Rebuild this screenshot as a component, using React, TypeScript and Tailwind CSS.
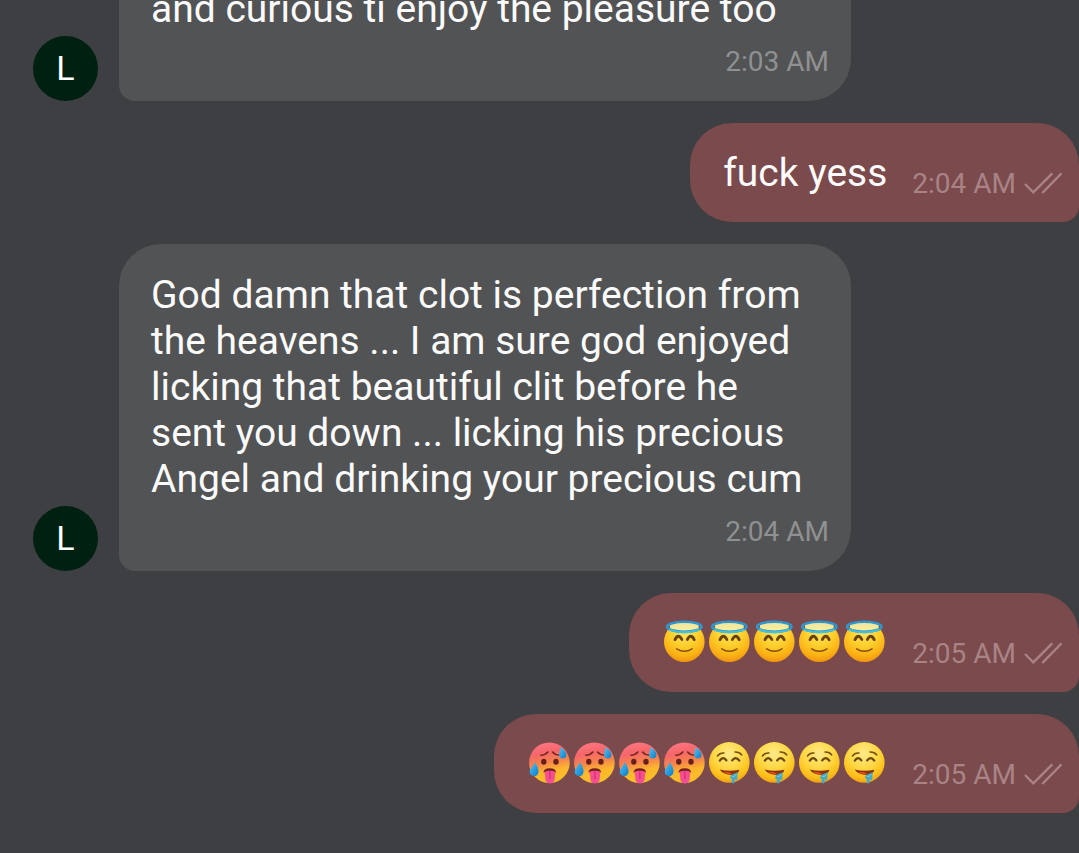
import type { ReactNode } from "react";

function AngelFace() {
  return (
    <svg viewBox="0 0 45 45" className="size-[45px] shrink-0" role="img" aria-label="smiling face with halo">
      <defs>
        <radialGradient id="angel" cx="0.5" cy="0.25" r="0.76">
          <stop offset="0" stopColor="#ffe766" />
          <stop offset="0.45" stopColor="#fed02e" />
          <stop offset="0.8" stopColor="#fbb013" />
          <stop offset="1" stopColor="#ee9112" />
        </radialGradient>
        <linearGradient id="halo" x1="0" y1="0" x2="0" y2="1">
          <stop offset="0" stopColor="#efe39a" />
          <stop offset="1" stopColor="#f8efa0" />
        </linearGradient>
      </defs>
      <circle cx="22.3" cy="21.7" r="20.3" fill="url(#angel)" />
      <ellipse cx="22.3" cy="6" rx="14.5" ry="4.6" fill="url(#halo)" />
      <ellipse cx="22.3" cy="6.8" rx="17.2" ry="5" fill="none" stroke="#2f97cf" strokeWidth="2.6" />
      <path d="M8 10Q22 14.6 36.5 10" fill="none" stroke="#42c0df" strokeWidth="2.2" strokeLinecap="round" />
      <path d="M13 19.6Q16.3 13 19.8 19.4M25.4 19.4Q28.8 13 32.2 19.6" fill="none" stroke="#67420f" strokeWidth="2.9" strokeLinecap="round" />
      <path d="M14.7 28.8Q22.3 33.8 30 28.8" fill="none" stroke="#85510b" strokeWidth="1.5" strokeLinecap="round" />
    </svg>
  );
}

function HotFace() {
  return (
    <svg viewBox="0 0 45 45" className="size-[45px] shrink-0" role="img" aria-label="hot face">
      <defs>
        <linearGradient id="hot" x1="0.4" y1="0" x2="0.6" y2="1">
          <stop offset="0" stopColor="#fb7680" />
          <stop offset="0.25" stopColor="#f5666a" />
          <stop offset="0.48" stopColor="#f6844c" />
          <stop offset="0.7" stopColor="#fcb72d" />
          <stop offset="1" stopColor="#f8c025" />
        </linearGradient>
        <linearGradient id="sweat" x1="0" y1="0" x2="1" y2="1">
          <stop offset="0" stopColor="#55c3f3" />
          <stop offset="1" stopColor="#087dca" />
        </linearGradient>
      </defs>
      <circle cx="22.4" cy="21.7" r="20.3" fill="url(#hot)" />
      <path d="M13.8 14.2Q18.6 14 20.8 11M25.6 11Q28 14 32 14" fill="none" stroke="#7a2823" strokeWidth="1.6" strokeLinecap="round" />
      <ellipse cx="16.8" cy="20.7" rx="2.7" ry="3" fill="#672019" />
      <ellipse cx="29" cy="20.7" rx="2.7" ry="3" fill="#672019" />
      <path d="M16.4 31.5Q16.8 27.2 22.8 27.2T29.2 31.5Q23 29.5 16.4 31.5Z" fill="#74201d" />
      <path d="M17.6 30.8Q23 28.6 28.3 30.8L27.6 38.5Q26.8 42.4 23 42.4T18.4 38.5Z" fill="#f44f91" />
      <path d="M22.9 31V37.5" stroke="#d72d72" strokeWidth="1.3" strokeLinecap="round" />
      <path d="M33.2 6.6C37 8 39.6 11.2 39.4 14.2C39 18.6 32.4 18.6 32.1 14.2C32 11.5 33.5 9.5 33.2 6.6Z" fill="url(#sweat)" />
      <path d="M7.8 21C10 24.7 11.9 28 11.5 31.4C10.6 36.5 3.2 36 2.8 31.2C2.6 27.5 6.6 25 7.8 21Z" fill="url(#sweat)" />
    </svg>
  );
}

function DroolingFace() {
  return (
    <svg viewBox="0 0 45 45" className="size-[45px] shrink-0" role="img" aria-label="drooling face">
      <defs>
        <radialGradient id="drooling" cx="0.48" cy="0.28" r="0.74">
          <stop offset="0" stopColor="#ffea8a" />
          <stop offset="0.5" stopColor="#fed743" />
          <stop offset="0.8" stopColor="#fcbf18" />
          <stop offset="1" stopColor="#ee9d17" />
        </radialGradient>
      </defs>
      <circle cx="22.3" cy="21.4" r="20.3" fill="url(#drooling)" />
      <path d="M10.5 15Q12.5 11.7 17 12M28 11Q32.5 10.8 34.8 14" fill="none" stroke="#75510c" strokeWidth="1.5" strokeLinecap="round" />
      <path d="M12.8 19.6Q16.2 14.8 19.4 19.4M25.2 19.4Q28.6 14.8 32.3 19.6" fill="none" stroke="#68450a" strokeWidth="2.3" strokeLinecap="round" />
      <path d="M12.6 28.6Q22 31 32.4 28.8Q31.4 34 25 34Q16.5 34.2 12.6 28.6Z" fill="#8c320c" />
      <path d="M16 31.2Q21 30.8 25 32.4Q23 34.4 16 31.2Z" fill="#e8512c" />
      <path d="M30.6 30.4L30.2 38.8Q28.8 40 28.5 38.4L27.8 37.8L27.6 41.6Q26 43.4 24.6 41.4L25 38.4Q23 38.2 23.2 36.2Q24 33.2 27 32.8Q29.4 32.4 30.6 30.4Z" fill="#43a9c7" />
      <path d="M25.5 35.6Q28.4 36 29 33.6" fill="none" stroke="#7dcbd5" strokeWidth="1" strokeLinecap="round" />
    </svg>
  );
}

function ReadMark() {
  return (
    <svg viewBox="0 0 38 24" className="h-6 w-[38px]" fill="none" stroke="currentColor" strokeWidth="2.4" role="img" aria-label="Read">
      <path d="M1 12L9.3 20.3L28.3 1.3M18.3 21L37.5 1.3" />
    </svg>
  );
}

function Incoming({ lines, time }: { lines: string[]; time: string }) {
  return (
    <article className="flex shrink-0 items-end gap-[21px] pl-[33px]">
      <div className="flex size-[65px] shrink-0 items-center justify-center rounded-full bg-[#002011] text-[34px] text-white">L</div>
      <div className="w-[732px] rounded-[42px] rounded-bl-2xl bg-[#525354] pt-7 pr-[22px] pb-[23px] pl-8">
        <p className="text-[39px] leading-[46px] whitespace-nowrap text-[#fafafa]">
          {lines.map((line) => (
            <span key={line} className="block">{line}</span>
          ))}
        </p>
        <time className="mt-3.5 block text-right text-[28px] leading-8 text-[#8f9091]">{time}</time>
      </div>
    </article>
  );
}

function Outgoing({ children, time }: { children: ReactNode; time: string }) {
  return (
    <article className="flex h-[99px] shrink-0 items-center gap-[25px] self-end rounded-[42px] rounded-br-2xl bg-[#7a4a4c] pr-[17px] pl-[33px]">
      <div className="flex text-[39px] leading-[46px] text-[#fafafa]">{children}</div>
      <div className="mt-[22px] flex items-center gap-2 text-[28px] leading-8 text-[#a98385]">
        <time>{time}</time>
        <ReadMark />
      </div>
    </article>
  );
}

export default function App() {
  return (
    <main className="flex h-screen flex-col justify-end gap-[22px] overflow-hidden bg-[#3e3f42] pb-10 font-['Roboto',sans-serif]">
      <Incoming lines={["and curious ti enjoy the pleasure too"]} time="2:03 AM" />
      <Outgoing time="2:04 AM">fuck yess</Outgoing>
      <Incoming
        lines={[
          "God damn that clot is perfection from",
          "the heavens ... I am sure god enjoyed",
          "licking that beautiful clit before he",
          "sent you down ... licking his precious",
          "Angel and drinking your precious cum",
        ]}
        time="2:04 AM"
      />
      <Outgoing time="2:05 AM">
        <AngelFace />
        <AngelFace />
        <AngelFace />
        <AngelFace />
        <AngelFace />
      </Outgoing>
      <Outgoing time="2:05 AM">
        <HotFace />
        <HotFace />
        <HotFace />
        <HotFace />
        <DroolingFace />
        <DroolingFace />
        <DroolingFace />
        <DroolingFace />
      </Outgoing>
    </main>
  );
}
